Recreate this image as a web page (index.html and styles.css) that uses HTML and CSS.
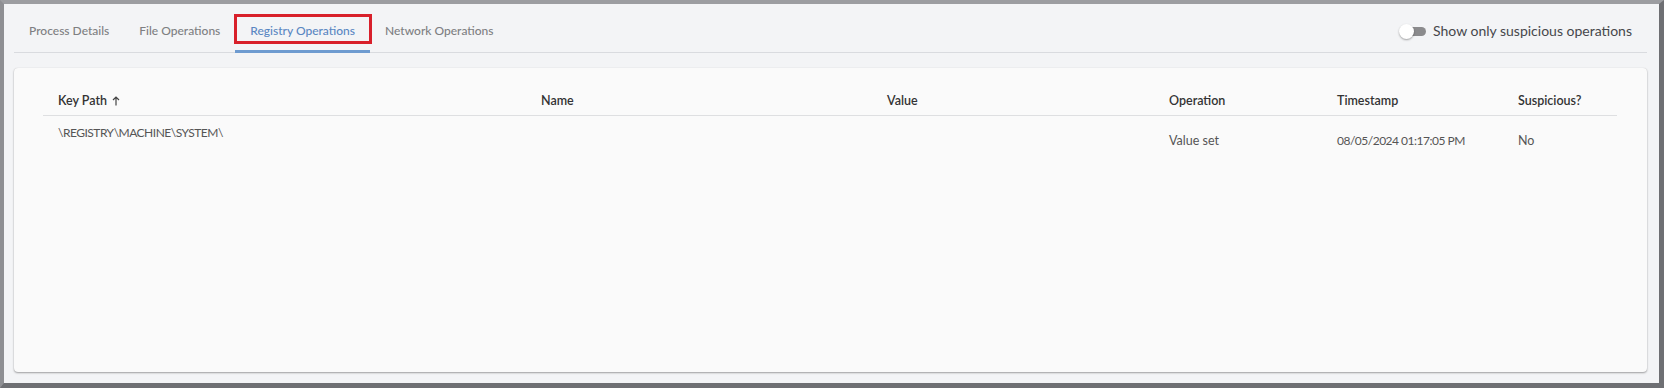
FILE: index.html
```html
<!DOCTYPE html>
<html lang="en">
<head>
  <meta charset="UTF-8" />
  <title>Process Activity</title>
  <meta name="viewport" content="width=device-width, initial-scale=1.0" />
  <link rel="stylesheet" href="styles.css">
</head>
<body>
  <div class="frame">
    <div class="tab-bar">
      <a class="tab">Process Details</a>
      <a class="tab">File Operations</a>
      <a class="tab active">Registry Operations</a>
      <a class="tab">Network Operations</a>
      <label class="filter">
        <span class="switch"><span class="track"></span><span class="knob"></span></span>
        Show only suspicious operations
      </label>
    </div>

    <div class="card">
      <table class="ops">
        <colgroup>
          <col class="c-path">
          <col class="c-name">
          <col class="c-value">
          <col class="c-op">
          <col class="c-time">
          <col>
        </colgroup>
        <thead>
          <tr>
            <th>Key Path <svg class="sort" width="8" height="10" viewBox="0 0 8 10"><path d="M4 9.5V1M1 4l3-3 3 3" fill="none" stroke="#444" stroke-width="1.2"/></svg></th>
            <th>Name</th>
            <th>Value</th>
            <th>Operation</th>
            <th>Timestamp</th>
            <th>Suspicious?</th>
          </tr>
        </thead>
        <tbody>
          <tr>
            <td class="path">\REGISTRY\MACHINE\SYSTEM\</td>
            <td></td>
            <td></td>
            <td>Value set</td>
            <td class="time">08/05/2024 01:17:05 PM</td>
            <td>No</td>
          </tr>
        </tbody>
      </table>
    </div>
  </div>
</body>
</html>
```

FILE: styles.css
```css
* {
  box-sizing: border-box;
}
body {
  margin: 0;
  font-family: Lato, "Noto Sans", sans-serif;
  color: #333;
}
.frame {
  height: 388px;
  display: flex;
  flex-direction: column;
  padding: 0 12px 11px 10px;
  background: #f3f4f6;
  border-style: solid;
  border-width: 4px 5px 5px 4px;
  border-color: #9c9da1 #6e6f73 #6e6f73 #8e8f93;
}

/* tabs */
.tab-bar {
  display: flex;
  border-bottom: 1px solid #d9dbdf;
}
.tab {
  position: relative;
  padding: 17px 15px 9px;
  margin-bottom: -1px;
  line-height: 20px;
  font-size: 12px;
  font-weight: 500;
  color: #7e7f82;
  border-bottom: 3px solid transparent;
  cursor: pointer;
}
.tab.active {
  color: #5a87c2;
  border-bottom-color: #6e9bd0;
}
.tab.active::before {
  content: "";
  position: absolute;
  top: 10px;
  bottom: 6px;
  left: -1px;
  right: -2px;
  border: 3px solid #d8202b;
}
.filter {
  margin-left: auto;
  padding: 17px 15px 0 0;
  line-height: 20px;
  font-size: 14px;
  color: #46474b;
  display: flex;
  align-items: flex-start;
  gap: 7px;
}
.switch {
  position: relative;
  width: 27px;
  height: 15px;
  margin-top: 3px;
}
.track {
  position: absolute;
  left: 6px;
  right: 0;
  top: 3px;
  height: 9px;
  border-radius: 5px;
  background: #8b8b8d;
}
.knob {
  position: absolute;
  left: 0;
  top: 0;
  width: 15px;
  height: 15px;
  border-radius: 50%;
  background: #fff;
  box-shadow: 0 1px 2px rgba(0, 0, 0, 0.35);
}

/* table card */
.card {
  flex: 1;
  margin-top: 15px;
  padding: 19px 30px 0 29px;
  background: #fafafa;
  border-radius: 4px;
  box-shadow: 0 1px 2px rgba(0, 0, 0, 0.35), 0 0 1px rgba(0, 0, 0, 0.15);
}
.ops {
  width: 100%;
  border-collapse: collapse;
  table-layout: fixed;
}
.c-path { width: 483px; }
.c-name { width: 346px; }
.c-value { width: 282px; }
.c-op { width: 168px; }
.c-time { width: 181px; }
.ops th {
  height: 28px;
  padding: 0 15px;
  text-align: left;
  font-size: 12.5px;
  font-weight: 600;
  color: #333;
  border-bottom: 1px solid #dedfe1;
}
.sort {
  margin-left: 2px;
  vertical-align: -1px;
}
.ops td {
  height: 52px;
  padding: 0 15px;
  font-size: 12.5px;
  line-height: 18px;
  color: #555;
  vertical-align: middle;
}
.ops td.path {
  vertical-align: top;
  padding-top: 8px;
}
.ops td.path,
.ops td.time {
  font-size: 12px;
  letter-spacing: -0.5px;
}
```
